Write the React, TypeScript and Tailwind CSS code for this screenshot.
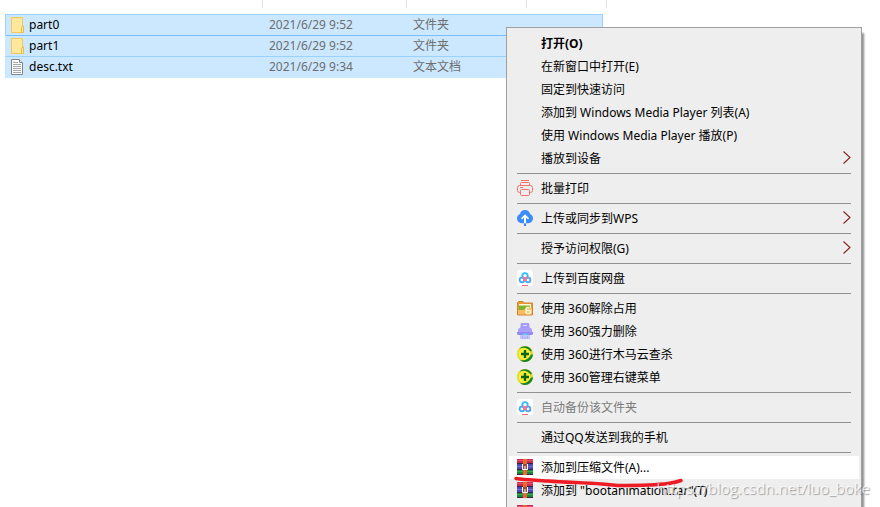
import * as React from "react";
import { clsx } from "clsx";

type IconName = "printer" | "cloud" | "baidu" | "folder360" | "shredder" | "shield" | "rar";

type MenuEntry = {
  label: string;
  icon?: IconName;
  submenu?: boolean;
  bold?: boolean;
  disabled?: boolean;
  active?: boolean;
};

const files = [
  { name: "part0", date: "2021/6/29 9:52", type: "文件夹", folder: true },
  { name: "part1", date: "2021/6/29 9:52", type: "文件夹", folder: true },
  { name: "desc.txt", date: "2021/6/29 9:34", type: "文本文档", folder: false },
];

const menuGroups: MenuEntry[][] = [
  [
    { label: "打开(O)", bold: true },
    { label: "在新窗口中打开(E)" },
    { label: "固定到快速访问" },
    { label: "添加到 Windows Media Player 列表(A)" },
    { label: "使用 Windows Media Player 播放(P)" },
    { label: "播放到设备", submenu: true },
  ],
  [{ label: "批量打印", icon: "printer" }],
  [{ label: "上传或同步到WPS", icon: "cloud", submenu: true }],
  [{ label: "授予访问权限(G)", submenu: true }],
  [{ label: "上传到百度网盘", icon: "baidu" }],
  [
    { label: "使用 360解除占用", icon: "folder360" },
    { label: "使用 360强力删除", icon: "shredder" },
    { label: "使用 360进行木马云查杀", icon: "shield" },
    { label: "使用 360管理右键菜单", icon: "shield" },
  ],
  [{ label: "自动备份该文件夹", icon: "baidu", disabled: true }],
  [{ label: "通过QQ发送到我的手机" }],
  [
    { label: "添加到压缩文件(A)...", icon: "rar", active: true },
    { label: "添加到 \"bootanimation.rar\"(T)", icon: "rar" },
    { label: "", icon: "rar" },
  ],
];

function FolderIcon() {
  return (
    <svg viewBox="0 0 14 16" className="h-4 w-3.5 shrink-0" aria-hidden="true">
      <path d="M.5.5h11v15H.5z" fill="#ffe79b" stroke="#efc95c" />
      <path d="M10.500 15.500v-5l1-1.500h1v6.500z" fill="#ffe79b" stroke="#e9bf4b" />
    </svg>
  );
}

function TextFileIcon() {
  return (
    <svg viewBox="0 0 14 16" className="h-4 w-3.5 shrink-0" aria-hidden="true">
      <path d="M.5.5h8l3 3v12H.5z" fill="#fff" stroke="#858585" />
      <path d="M8.5.5v3h3" fill="#eee" stroke="#858585" />
      <path d="M2 3.5h5M2 5.5h8M2 7.5h8M2 9.5h8M2 11.5h8M2 13.5h8" stroke="#a3a6aa" />
    </svg>
  );
}

function PrinterIcon() {
  return (
    <g fill="none" stroke="#f4716d">
      <path d="M4 .5h8M3.500 5V3.500q0-1 1-1h7q1 0 1 1V5" />
      <path d="M3.500 12.500h-1q-2 0-2-2v-3q0-2 2-2h11q2 0 2 2v3q0 2-2 2h-1" />
      <rect x="3.500" y="9.500" width="9" height="6" rx="1" />
      <path d="M3 7.500h3" />
    </g>
  );
}

function CloudIcon() {
  return (
    <>
      <path
        d="M8 0c2.500 0 4.500 1.600 5 4 1.900.8 3 2.400 3 4.500 0 2.700-2 4.700-4.700 4.700H4.700C2 13.200 0 11.200 0 8.500 0 6.400 1.100 4.800 3 4c.5-2.400 2.500-4 5-4z"
        fill="#3b8bfb"
      />
      <path d="M8 4.200l4 4.100-1 1.100-2-1.900V13H7V7.500L5 9.400 4 8.300z" fill="#fff" />
      <path d="M7 13.500h2V16H7z" fill="#347ef0" />
    </>
  );
}

function BaiduIcon() {
  return (
    <>
      <rect width="16" height="16" rx="3" fill="#fff" />
      <g fill="none" strokeWidth="1.800">
        <circle cx="8" cy="5.800" r="2.700" stroke="#2cbcff" />
        <circle cx="4.900" cy="10" r="2.300" stroke="#35a9fa" />
        <circle cx="11.100" cy="10" r="2.300" stroke="#4ba2f3" />
        <path d="M5.600 7.300Q8 9 10.400 7.300M6.700 11L8 8.800 9.300 11" stroke="#f47a94" />
      </g>
      <path d="M5 15.500h6" stroke="#fb6673" />
    </>
  );
}

function Folder360Icon() {
  return (
    <>
      <path d="M.5 2.500l1-1H6l1.500 1.500h8v12H.5z" fill="#e79a37" stroke="#d5832b" />
      <path d="M2 4h12v5H2z" fill="#fff7d7" />
      <path d="M2 5.500h11V11H2z" fill="#7eb52f" />
      <path d="M1 10h6l2-2h6v6.500H1z" fill="#f5bd60" />
      <path d="M12.500 7.500H10l-1 1.500v3.500l1 1h2.500l1-1v-2H9.500" fill="none" stroke="#fff8df" strokeWidth="1.300" />
    </>
  );
}

function ShredderIcon() {
  return (
    <>
      <path d="M4 0h8l1 6H3z" fill="#a69bf8" />
      <path d="M6 2.500h4" stroke="#dedaff" />
      <rect x="1" y="5" width="14" height="7" rx="2" fill="#aaa0fb" />
      <path d="M0 9h16v2l-1 1H1l-1-1z" fill="#938df2" />
      <path d="M3 12h10v4H3z" fill="#c5c3fc" />
      <path d="M6 11.500h4" stroke="#54d9fb" strokeWidth="1.500" />
      <path d="M5.500 13v3M8 14v2M10.500 13v3" stroke="#a9a9f7" />
    </>
  );
}

function ShieldIcon() {
  return (
    <>
      <circle cx="8" cy="8" r="8" fill="#d9dd27" />
      <circle cx="7.500" cy="8" r="6" fill="#ffee35" />
      <path d="M2.500 2.500C6-1 12-.5 15 4.500l-1.700 1C11 2 7 1 2.500 2.500z" fill="#15852a" />
      <path d="M16 8.500C15 15.500 8 18 3 14.200c5.500.7 9-1.700 11-5.700z" fill="#15852a" />
      <path d="M8 4v8M4 8h8" stroke="#086717" strokeWidth="2.400" />
    </>
  );
}

function RarIcon() {
  return (
    <>
      <path d="M0 0h16v5H0z" fill="#c92b50" />
      <path d="M0 5h16v6H0z" fill="#4b4bb4" />
      <path d="M0 11h16v5H0z" fill="#17873c" />
      <path d="M0 1.500h16" stroke="#e75272" />
      <path d="M0 7.500h16" stroke="#7770ce" />
      <path d="M0 12.500h16" stroke="#38ab5a" />
      <path d="M0 4.500h16M0 10.500h16M0 15.500h16" stroke="#33264a" />
      <path d="M6 0h4v16H6z" fill="#e9692b" />
      <path d="M5 5h6v6H5z" fill="#9a4a3c" />
      <path d="M5.500 5v5.500h5V5M8 7v3" fill="none" stroke="#fff" />
    </>
  );
}

const icons: Record<IconName, () => React.ReactElement> = {
  printer: PrinterIcon,
  cloud: CloudIcon,
  baidu: BaiduIcon,
  folder360: Folder360Icon,
  shredder: ShredderIcon,
  shield: ShieldIcon,
  rar: RarIcon,
};

function MenuItem({ entry }: { entry: MenuEntry }) {
  const Icon = entry.icon ? icons[entry.icon] : null;

  return (
    <button
      type="button"
      role="menuitem"
      disabled={entry.disabled}
      className={clsx(
        "flex h-[23px] w-full items-start gap-2 px-2 pt-[3px] text-left text-xs whitespace-nowrap",
        entry.bold && "font-bold",
        entry.disabled ? "text-[#7b7b7b]" : "text-black hover:bg-white",
        entry.active && "bg-white"
      )}
    >
      <span className="h-4 w-4 shrink-0">
        {Icon && (
          <svg viewBox="0 0 16 16" className="h-4 w-4" aria-hidden="true">
            <Icon />
          </svg>
        )}
      </span>
      <span className="flex-1 leading-[17px]">{entry.label}</span>
      {entry.submenu && (
        <svg viewBox="0 0 8 14" className="h-3.5 w-2 shrink-0" fill="none" aria-hidden="true">
          <path d="M.500 1.500l6.500 6-6.500 6" stroke="#8b2222" strokeWidth="1.100" />
        </svg>
      )}
    </button>
  );
}

function FileList() {
  return (
    <main>
      {/* Column dividers */}
      <div className="mb-1.5 flex h-2">
        <span className="w-[263px] border-r border-[#e0e0e0]" />
        <span className="w-36 border-r border-[#e0e0e0]" />
        <span className="w-30 border-r border-[#e0e0e0]" />
        <span className="w-20 border-r border-[#e0e0e0]" />
      </div>

      <table className="ml-[5px] w-[598px] table-fixed border-separate border-spacing-0 border-b border-[#cce8ff] bg-[#cce8ff] text-xs">
        <colgroup>
          <col className="w-[258px]" />
          <col className="w-36" />
          <col className="w-30" />
          <col />
        </colgroup>
        <tbody>
          {files.map((file, i) => (
            <tr
              key={file.name}
              className={clsx(
                "h-[21px] [&>td]:border-t [&>td]:p-0",
                i === 0 && "[&>td]:border-[#99d1ff] [&>td:first-child]:border-l [&>td:last-child]:border-r",
                i === 1 && "[&>td]:border-[#7abfff] [&>td:first-child]:border-l [&>td:first-child]:border-l-[#cce8ff]",
                i === 2 && "[&>td]:border-[#99d1ff] [&>td:first-child]:border-l [&>td:first-child]:border-l-[#cce8ff]"
              )}
            >
              <td>
                <div className="flex h-5 items-center gap-1 pl-[5px] text-black">
                  {file.folder ? <FolderIcon /> : <TextFileIcon />}
                  {file.name}
                </div>
              </td>
              <td>
                <div className="pl-1.5 text-[#6d6d6d]">{file.date}</div>
              </td>
              <td>
                <div className="pl-1.5 text-[#6d6d6d]">{file.type}</div>
              </td>
              <td />
            </tr>
          ))}
        </tbody>
      </table>
    </main>
  );
}

function ContextMenu() {
  return (
    <div
      role="menu"
      className="absolute top-[27px] left-[506px] w-[356px] border border-[#a0a0a0] bg-[#eeeeee] px-0.5 py-1 shadow-[3px_5px_2px_-1px_#8c8c8c]"
    >
      {menuGroups.map((group, i) => (
        <React.Fragment key={group[0].label}>
          {i > 0 && <hr className="mx-2 my-[3px] border-t border-[#919191]" />}
          {group.map((entry) => (
            <MenuItem key={entry.label} entry={entry} />
          ))}
        </React.Fragment>
      ))}
    </div>
  );
}

export default function App() {
  return (
    <div className="relative h-screen overflow-hidden bg-white font-['Noto_Sans','Noto_Sans_CJK_SC',sans-serif]">
      <FileList />
      <ContextMenu />

      {/* Pen mark under the archive entry */}
      <svg
        viewBox="0 0 170 12"
        className="pointer-events-none absolute top-[476px] left-[514px] h-3 w-[170px]"
        fill="none"
        aria-hidden="true"
      >
        <path
          d="M2 2.500C12 4 22 4 34 5c18 1.500 36 1.500 54 3l16 1.500c20 0 36 0 50-2 5-.5 9-1.500 13-3"
          stroke="#ed1c24"
          strokeWidth="3.500"
          strokeLinecap="round"
          strokeLinejoin="round"
        />
      </svg>

      <span className="pointer-events-none absolute top-[478px] right-2.5 font-['Open_Sans',sans-serif] text-[15px] leading-5 text-white/75 [text-shadow:1px_1px_1px_#00000055]">
        https://blog.csdn.net/luo_boke
      </span>
    </div>
  );
}
